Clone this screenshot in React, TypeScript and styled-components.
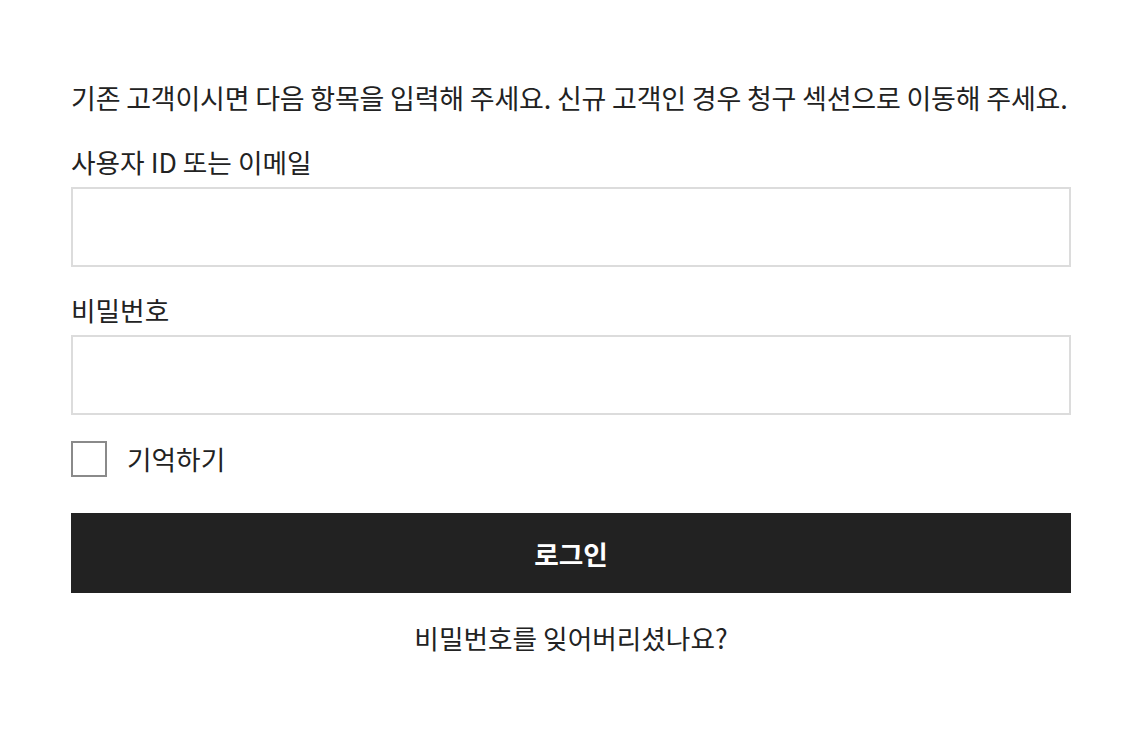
import styled, { createGlobalStyle } from "styled-components";

const GlobalStyle = createGlobalStyle`
  html, body {
    margin: 0;
    padding: 0;
    background: #fff;
  }
  body {
    font-family: "Noto Sans CJK KR", "Noto Sans", sans-serif;
    color: #222;
  }
`;

export default function App() {
  return (
    <>
      <GlobalStyle />
      <Page>
        <LoginForm onSubmit={(e) => e.preventDefault()}>
          <Intro>
            기존 고객이시면 다음 항목을 입력해 주세요. 신규 고객인 경우 청구 섹션으로 이동해 주세요.
          </Intro>

          <Field>
            <Label htmlFor="user">사용자 ID 또는 이메일</Label>
            <Input id="user" type="text" />
          </Field>

          <Field>
            <Label htmlFor="pass">비밀번호</Label>
            <Input id="pass" type="password" />
          </Field>

          <RememberRow>
            <CheckBox type="checkbox" id="remember" />
            <RememberLabel htmlFor="remember">기억하기</RememberLabel>
          </RememberRow>

          <SubmitButton type="submit">로그인</SubmitButton>

          <ForgotLink href="#">비밀번호를 잊어버리셨나요?</ForgotLink>
        </LoginForm>
      </Page>
    </>
  );
}

const Page = styled.div`
  padding: 78px 0 0 71px;
`;

const LoginForm = styled.form`
  width: 1000px;
  display: flex;
  flex-direction: column;
`;

const Intro = styled.p`
  margin: 0;
  font-size: 27px;
  line-height: 40px;
  letter-spacing: -0.2px;
  white-space: nowrap;
`;

const Field = styled.div`
  display: flex;
  flex-direction: column;
  gap: 5px;
  margin-top: 24px;

  & + & {
    margin-top: 23px;
  }
`;

const Label = styled.label`
  font-size: 26.7px;
  line-height: 40px;
`;

const Input = styled.input`
  box-sizing: border-box;
  width: 100%;
  height: 80px;
  border: 2px solid #dcdcdc;
  border-radius: 0;
  padding: 0 20px;
  font-size: 24px;
  font-family: inherit;
  outline: none;
`;

const RememberRow = styled.div`
  display: flex;
  align-items: center;
  gap: 20px;
  margin-top: 24px;
`;

const CheckBox = styled.input`
  appearance: none;
  box-sizing: border-box;
  width: 36px;
  height: 36px;
  margin: 0;
  border: 2px solid #8a8a8a;
  background: #fff;
`;

const RememberLabel = styled.label`
  font-size: 26.7px;
  line-height: 40px;
`;

const SubmitButton = styled.button`
  margin-top: 34px;
  height: 80px;
  border: none;
  background: #222;
  color: #fff;
  font-family: inherit;
  font-size: 26.7px;
  font-weight: 700;
  cursor: pointer;
`;

const ForgotLink = styled.a`
  margin-top: 25px;
  align-self: center;
  font-size: 26.7px;
  line-height: 40px;
  color: #222;
  text-decoration: none;
`;
